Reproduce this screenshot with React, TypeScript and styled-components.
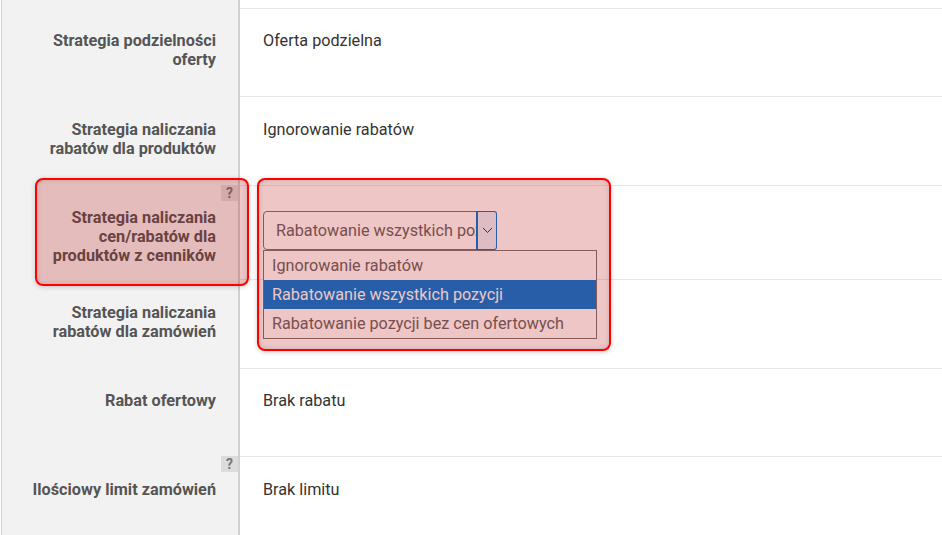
import React from 'react';
import styled, { createGlobalStyle } from 'styled-components';

const Global = createGlobalStyle`
  html, body { margin: 0; padding: 0; background: #fff; }
  body { font-family: Roboto, "Liberation Sans", sans-serif; overflow: hidden; }
`;

const Page = styled.div`
  position: relative;
  width: 942px;
  height: 535px;
  overflow: hidden;
  padding-left: 1px;
  box-sizing: border-box;
`;

const Table = styled.div`
  display: flex;
  flex-direction: column;
  border-left: 1px solid #d0d0d0;
`;

const Row = styled.div<{ $h: number; $shift?: number }>`
  --shift: ${p => p.$shift ?? 0}px;
  display: grid;
  grid-template-columns: 238px 1fr;
  height: ${p => p.$h}px;
`;

const LabelCell = styled.div`
  position: relative;
  box-sizing: border-box;
  background: #f2f2f2;
  border-right: 2px solid #d0d0d0;
  padding: calc(23px + var(--shift)) 22px 0 0;
  width: 238px;
  text-align: right;
  font-size: 16.25px;
  font-weight: 700;
  line-height: 19px;
  color: #555;
`;

const ValueCell = styled.div<{ $pad?: number }>`
  box-sizing: border-box;
  border-top: 1px solid #e8e8e8;
  padding: calc(${p => p.$pad ?? 22}px + var(--shift)) 0 0 23px;
  font-size: 16.2px;
  line-height: 19px;
  color: #333;
  position: relative;
`;

const Help = styled.span`
  position: absolute;
  top: 0;
  right: 0;
  width: 17px;
  height: 16px;
  background: #dcdcdc;
  color: #777;
  font-size: 14px;
  font-weight: 700;
  line-height: 16px;
  text-align: center;
`;

const SelectBox = styled.div`
  display: flex;
  box-sizing: border-box;
  width: 234px;
  height: 39px;
  border: 1px solid #767676;
  border-radius: 4px;
  background: #fff;
`;

const SelectText = styled.span`
  flex: 1;
  min-width: 0;
  padding-left: 12px;
  white-space: nowrap;
  overflow: hidden;
  font-size: 16.2px;
  line-height: 37px;
  color: #666;
`;

const ArrowBox = styled.span`
  box-sizing: border-box;
  flex: none;
  width: 21px;
  height: 39px;
  margin: -1px -1px -1px 0;
  border: 1px solid #0078d7;
  border-left-width: 2px;
  border-radius: 0 3px 3px 0;
  background: #ebf3fb;
  display: flex;
  align-items: center;
  justify-content: center;
`;

const OptionList = styled.div`
  position: absolute;
  z-index: 1;
  left: 23px;
  top: 64px;
  width: 334px;
  box-sizing: border-box;
  border: 1px solid #767676;
  background: #fff;
`;

const Option = styled.div<{ $selected?: boolean }>`
  height: 29px;
  padding-left: 8px;
  font-size: 16.2px;
  line-height: 29px;
  white-space: nowrap;
  color: ${p => (p.$selected ? '#fff' : '#666')};
  background: ${p => (p.$selected ? '#0078d7' : 'transparent')};
`;

const Highlight = styled.div<{ $l: number; $t: number; $w: number; $h: number }>`
  position: absolute;
  z-index: 2;
  left: ${p => p.$l}px;
  top: ${p => p.$t}px;
  width: ${p => p.$w}px;
  height: ${p => p.$h}px;
  box-sizing: border-box;
  border: 2px solid #f00;
  border-radius: 8px;
  background: rgba(180, 0, 0, 0.224);
  box-shadow: 0 1px 5px rgba(0, 0, 0, 0.2), inset 0 0 5px rgba(0, 0, 0, 0.15);
`;

const Label = ({ lines }: { lines: string[] }) => (
  <>
    {lines.map(l => (
      <div key={l}>{l}</div>
    ))}
  </>
);

export default function App() {
  return (
    <Page>
      <Global />
      <Table>
        <Row $h={8}>
          <LabelCell />
          <div />
        </Row>
        <Row $h={88}>
          <LabelCell>
            <Label lines={['Strategia podzielności', 'oferty']} />
          </LabelCell>
          <ValueCell>Oferta podzielna</ValueCell>
        </Row>
        <Row $h={89} $shift={1}>
          <LabelCell>
            <Label lines={['Strategia naliczania', 'rabatów dla produktów']} />
          </LabelCell>
          <ValueCell>Ignorowanie rabatów</ValueCell>
        </Row>
        <Row $h={94}>
          <LabelCell>
            <Help>?</Help>
            <Label lines={['Strategia naliczania', 'cen/rabatów dla', 'produktów z cenników']} />
          </LabelCell>
          <ValueCell $pad={25}>
            <SelectBox>
              <SelectText>Rabatowanie wszystkich pozycji</SelectText>
              <ArrowBox>
                <svg width="11" height="7" viewBox="0 0 11 7" fill="none">
                  <path d="M1 1l4.5 4.5L10 1" stroke="#333" strokeWidth="1" />
                </svg>
              </ArrowBox>
            </SelectBox>
            <OptionList>
              <Option>Ignorowanie rabatów</Option>
              <Option $selected>Rabatowanie wszystkich pozycji</Option>
              <Option>Rabatowanie pozycji bez cen ofertowych</Option>
            </OptionList>
          </ValueCell>
        </Row>
        <Row $h={89} $shift={1}>
          <LabelCell>
            <Label lines={['Strategia naliczania', 'rabatów dla zamówień']} />
          </LabelCell>
          <ValueCell />
        </Row>
        <Row $h={88}>
          <LabelCell>
            <Label lines={['Rabat ofertowy']} />
          </LabelCell>
          <ValueCell>Brak rabatu</ValueCell>
        </Row>
        <Row $h={89} $shift={1}>
          <LabelCell>
            <Help>?</Help>
            <Label lines={['Ilościowy limit zamówień']} />
          </LabelCell>
          <ValueCell>Brak limitu</ValueCell>
        </Row>
      </Table>
      <Highlight $l={35} $t={178} $w={214} $h={108} />
      <Highlight $l={257} $t={178} $w={354} $h={173} />
    </Page>
  );
}
